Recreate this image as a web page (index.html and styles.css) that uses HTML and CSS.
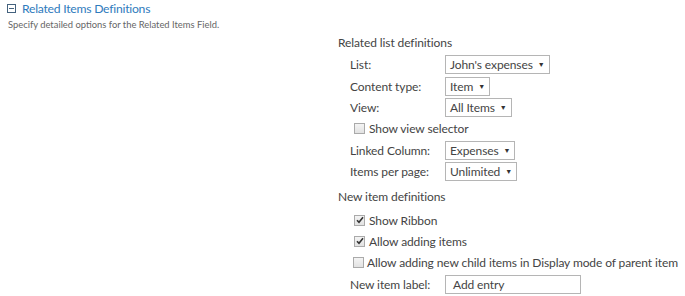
FILE: index.html
```html
<!DOCTYPE html>
<html>
<head>
<meta charset="utf-8">
<link rel="stylesheet" href="styles.css">
</head>
<body>
<div class="section-head">
  <svg class="collapse-icon" width="9" height="9" viewBox="0 0 9 9"><rect x="0.5" y="0.5" width="8" height="8" fill="#fff" stroke="#44627e"/><rect x="2" y="4" width="5" height="1" fill="#44627e"/></svg>
  <span class="section-title">Related Items Definitions</span>
</div>
<div class="section-desc">Specify detailed options for the Related Items Field.</div>

<div class="form">
  <div class="group-title">Related list definitions</div>
  <div class="row"><span class="label">List:</span><span class="select">John's expenses<span class="arrow">▼</span></span></div>
  <div class="row"><span class="label">Content type:</span><span class="select">Item<span class="arrow">▼</span></span></div>
  <div class="row"><span class="label">View:</span><span class="select">All Items<span class="arrow">▼</span></span></div>
  <div class="row check-row"><span class="cb"></span><span>Show view selector</span></div>
  <div class="row"><span class="label">Linked Column:</span><span class="select">Expenses<span class="arrow">▼</span></span></div>
  <div class="row"><span class="label">Items per page:</span><span class="select">Unlimited<span class="arrow">▼</span></span></div>

  <div class="group-title second">New item definitions</div>
  <div class="row check-row"><span class="cb checked"><svg width="8" height="8" viewBox="0 0 8 8"><path d="M1 4.2 L3 6.3 L7 1.3" fill="none" stroke="#333" stroke-width="1.6"/></svg></span><span>Show Ribbon</span></div>
  <div class="row check-row"><span class="cb checked"><svg width="8" height="8" viewBox="0 0 8 8"><path d="M1 4.2 L3 6.3 L7 1.3" fill="none" stroke="#333" stroke-width="1.6"/></svg></span><span>Allow adding items</span></div>
  <div class="row check-row tight"><span class="cb"></span><span>Allow adding new child items in Display mode of parent item</span></div>
  <div class="row"><span class="label">New item label:</span><span class="textbox">Add entry</span></div>
</div>
</body>
</html>
```

FILE: styles.css
```css
html, body {
  margin: 0;
  padding: 0;
  background: #fff;
}
body {
  font-family: Lato, "Open Sans", sans-serif;
  font-size: 12px;
  letter-spacing: -0.1px;
  color: #444;
  width: 685px;
  height: 296px;
  overflow: hidden;
  white-space: nowrap;
}
.section-head {
  display: flex;
  align-items: center;
  height: 16px;
  padding-left: 7px;
  gap: 6px;
}
.collapse-icon {
  display: block;
}
.section-title {
  color: #2f7bbd;
  font-size: 12.2px;
  letter-spacing: -0.25px;
}
.section-desc {
  font-size: 9.4px;
  letter-spacing: 0;
  color: #666;
  padding-left: 8px;
  margin-top: 3px;
}
.form {
  margin-left: 338px;
  margin-top: 2px;
  display: flex;
  flex-direction: column;
}
.group-title {
  height: 21px;
  line-height: 21px;
  color: #444;
}
.group-title.second {
  height: 24px;
  line-height: 24px;
  margin-top: 3px;
}
.row {
  height: 21.4px;
  display: flex;
  align-items: center;
  padding-left: 12px;
}
.row:nth-child(2) {
  margin-top: 1px;
}
.label {
  width: 95px;
  flex: none;
}
.select, .textbox {
  border: 1px solid #b5b5b5;
  height: 17px;
  line-height: 17px;
  padding: 0 4px 0 4px;
  display: inline-flex;
  align-items: center;
  background: #fff;
  color: #444;
}
.arrow {
  font-size: 7px;
  margin-left: 5px;
  color: #333;
}
.textbox {
  width: 123px;
  padding-left: 7px;
}
.check-row {
  padding-left: 16px;
  gap: 4px;
}
.check-row.tight {
  padding-left: 15px;
  gap: 3px;
}
.cb {
  width: 9px;
  height: 9px;
  border: 1px solid #aaa;
  background: linear-gradient(#f4f4f4, #e2e2e2);
  display: inline-flex;
  align-items: center;
  justify-content: center;
  flex: none;
}
.cb svg {
  display: block;
}
```
